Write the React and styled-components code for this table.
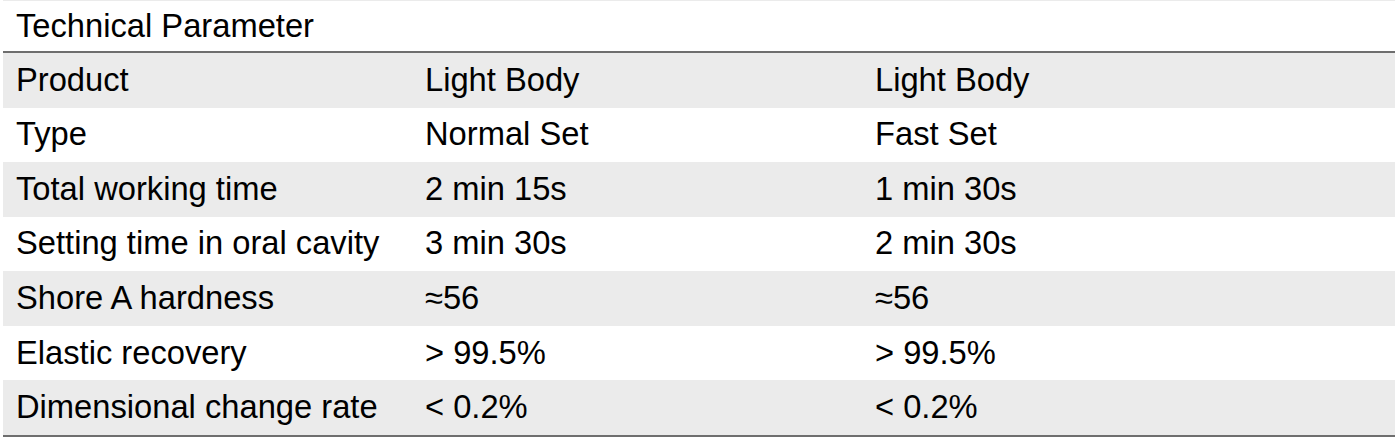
import styled, {createGlobalStyle} from "styled-components";

const Global = createGlobalStyle`
  html, body {
    margin: 0;
    padding: 0;
    background: #fff;
  }
  body {
    font-family: "Liberation Sans", Arial, sans-serif;
    color: #000;
  }
`

const Sheet = styled.div`
  width: 1392px;
  margin-left: 3px;
  border-top: 1px solid #ebebeb;
  font-size: 32.7px;
`

const Title = styled.div`
  box-sizing: border-box;
  height: 52px;
  padding: 0 13px;
  display: flex;
  align-items: center;
  border-bottom: 2px solid #6e6e6e;
`

const Rows = styled.div`
  border-bottom: 2px solid #6e6e6e;
`

const Row = styled.div`
  box-sizing: border-box;
  display: grid;
  grid-template-columns: 409px 450px 1fr;
  height: 54.57px;
  padding-bottom: 1px;
  align-items: center;
  background: ${p => p.$shaded ? "#ebebeb" : "#fff"};
`

const Cell = styled.div`
  padding-left: 13px;
  white-space: nowrap;
`

const data = [
    ["Product", "Light Body", "Light Body"],
    ["Type", "Normal Set", "Fast Set"],
    ["Total working time", "2 min 15s", "1 min 30s"],
    ["Setting time in oral cavity", "3 min 30s", "2 min 30s"],
    ["Shore A hardness", "≈56", "≈56"],
    ["Elastic recovery", "> 99.5%", "> 99.5%"],
    ["Dimensional change rate", "< 0.2%", "< 0.2%"],
]

export default function App() {
    return <>
        <Global/>
        <Sheet>
            <Title>Technical Parameter</Title>
            <Rows>
                {data.map((row, i) => (
                    <Row key={row[0]} $shaded={i % 2 === 0}>
                        {row.map((c, j) => <Cell key={j}>{c}</Cell>)}
                    </Row>
                ))}
            </Rows>
        </Sheet>
    </>
}
